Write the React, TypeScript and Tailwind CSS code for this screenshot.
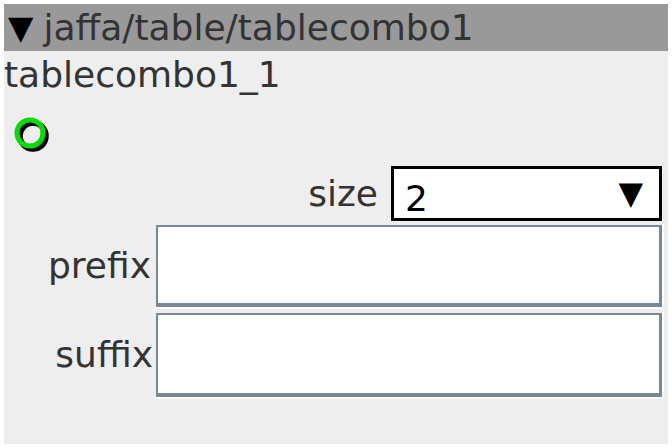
export default function App() {
  const font = { fontFamily: '"DejaVu Sans", sans-serif' };

  return (
    <div className="w-[672px] h-[448px] bg-white p-1" style={font}>
      <div className="w-[664px] h-[440px] bg-[#eeeeee] text-[#333333] text-[36px]">
        <div className="h-[47px] bg-[#999999] leading-[47px] pl-[4px] flex items-center">
          <span className="text-black text-[33px] mr-[10px]">▼</span>
          <span>jaffa/table/tablecombo1</span>
        </div>
        <div className="h-[48px] leading-[48px]">tablecombo1_1</div>

        <div className="h-[67px] pl-[5px] pt-[12px]">
          <svg width="44" height="44" viewBox="0 0 44 44">
            <circle cx="24" cy="25" r="13" fill="none" stroke="#000000" strokeWidth="5.5" />
            <circle cx="21" cy="22" r="13" fill="none" stroke="#00dd00" strokeWidth="5" />
          </svg>
        </div>

        <div className="flex items-center justify-end pr-[6px] h-[55px]">
          <span className="mr-[13px]">size</span>
          <div className="w-[271px] h-[55px] border-[3px] border-black bg-white flex items-end justify-between pl-[11px] pr-[16px] pb-[1px]">
            <span className="text-black leading-none">2</span>
            <span className="text-black text-[32px] leading-none self-center">▼</span>
          </div>
        </div>

        <div className="flex items-center justify-end pr-[4px] mt-[2px]">
          <span className="mr-[3px]">prefix</span>
          <div className="border-2 border-t-[#eeeeee] border-l-[#eeeeee] border-r-white border-b-white">
            <div className="w-[506px] h-[82px] bg-white border-[#7a8896] border-t-2 border-l-2 border-r-[3px] border-b-[4px]" />
          </div>
        </div>

        <div className="flex items-center justify-end pr-[4px] mt-[2px]">
          <span className="mr-[1px]">suffix</span>
          <div className="border-2 border-t-[#eeeeee] border-l-[#eeeeee] border-r-white border-b-white">
            <div className="w-[506px] h-[84px] bg-white border-[#7a8896] border-t-2 border-l-2 border-r-[3px] border-b-[4px]" />
          </div>
        </div>
      </div>
    </div>
  );
}
